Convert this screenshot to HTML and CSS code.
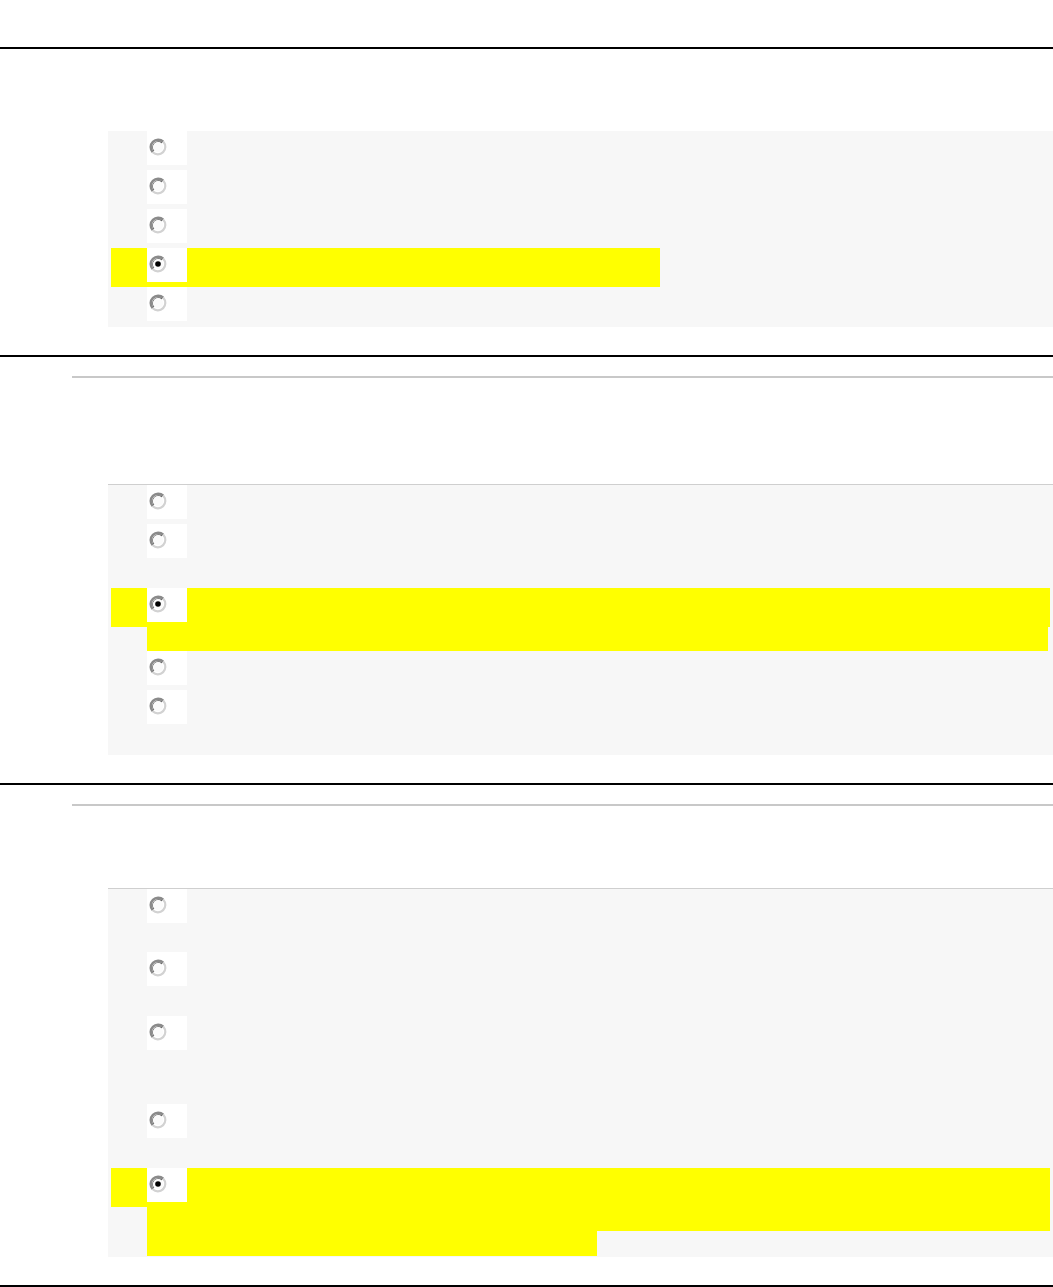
FILE: index.html
```html
<!DOCTYPE html>
<html lang="en">
<head>
    <meta charset="UTF-8">
    <meta name="viewport" content="width=device-width, initial-scale=1.0">
    <title>Quiz review</title>
    <link rel="stylesheet" href="styles.css">
</head>
<body>
    <svg class="sprite" xmlns="http://www.w3.org/2000/svg">
        <symbol id="radio" viewBox="0 0 18 18">
            <circle cx="9" cy="9" r="8" fill="#fff"/>
            <path d="M3.7 14.3A7.5 7.5 0 0 1 14.3 3.7" fill="none" stroke="#8a8a8a" stroke-width="2.4"/>
            <path d="M14.3 3.7A7.5 7.5 0 0 1 3.7 14.3" fill="none" stroke="#d2d2d2" stroke-width="2.2"/>
            <path d="M5 13A5.7 5.7 0 0 1 13 5" fill="none" stroke="#5e5e5e" stroke-width="1.2"/>
            <circle cx="9" cy="9" r="5.1" fill="#fbfbfb"/>
        </symbol>
        <symbol id="radio-checked" viewBox="0 0 18 18">
            <use href="#radio"/>
            <circle cx="9" cy="9" r="2.8" fill="#000"/>
        </symbol>
    </svg>

    <div class="header"></div>

    <!-- question 1 -->
    <div class="question">
        <div class="q-text"></div>
        <div class="answers">
            <div class="option">
                <div class="first"><span class="radio-cell"><svg><use href="#radio"/></svg></span></div>
            </div>
            <div class="option">
                <div class="first"><span class="radio-cell"><svg><use href="#radio"/></svg></span></div>
            </div>
            <div class="option">
                <div class="first"><span class="radio-cell"><svg><use href="#radio"/></svg></span></div>
            </div>
            <div class="option">
                <div class="first hl" style="width: 549px"><span class="radio-cell"><svg><use href="#radio-checked"/></svg></span></div>
            </div>
            <div class="option">
                <div class="first"><span class="radio-cell"><svg><use href="#radio"/></svg></span></div>
            </div>
        </div>
    </div>

    <!-- question 2 -->
    <div class="question">
        <hr class="rule">
        <div class="q-text tall"></div>
        <div class="answers boxed">
            <div class="option">
                <div class="first"><span class="radio-cell"><svg><use href="#radio"/></svg></span></div>
            </div>
            <div class="option">
                <div class="first"><span class="radio-cell"><svg><use href="#radio"/></svg></span></div>
                <div class="more"></div>
            </div>
            <div class="option">
                <div class="first hl" style="width: 939px"><span class="radio-cell"><svg><use href="#radio-checked"/></svg></span></div>
                <div class="more hl" style="width: 901px"></div>
            </div>
            <div class="option">
                <div class="first"><span class="radio-cell"><svg><use href="#radio"/></svg></span></div>
            </div>
            <div class="option">
                <div class="first"><span class="radio-cell"><svg><use href="#radio"/></svg></span></div>
                <div class="more"></div>
            </div>
        </div>
    </div>

    <!-- question 3 -->
    <div class="question">
        <hr class="rule">
        <div class="q-text"></div>
        <div class="answers boxed">
            <div class="option">
                <div class="first"><span class="radio-cell"><svg><use href="#radio"/></svg></span></div>
                <div class="more"></div>
            </div>
            <div class="option">
                <div class="first"><span class="radio-cell"><svg><use href="#radio"/></svg></span></div>
                <div class="more"></div>
            </div>
            <div class="option">
                <div class="first"><span class="radio-cell"><svg><use href="#radio"/></svg></span></div>
                <div class="more"></div>
                <div class="more"></div>
            </div>
            <div class="option">
                <div class="first"><span class="radio-cell"><svg><use href="#radio"/></svg></span></div>
                <div class="more"></div>
            </div>
            <div class="option">
                <div class="first hl" style="width: 939px"><span class="radio-cell"><svg><use href="#radio-checked"/></svg></span></div>
                <div class="more hl" style="width: 903px"></div>
                <div class="more hl" style="width: 450px"></div>
            </div>
        </div>
    </div>
</body>
</html>
```

FILE: styles.css
```css
body {
    font-family: "Liberation Sans", Arial, sans-serif;
    background-color: #fff;
    margin: 0;
    padding: 0;
}
.sprite {
    display: none;
}
.header {
    height: 47px;
    border-bottom: 2px solid #000;
}
.question {
    padding-bottom: 28px;
    border-bottom: 2px solid #000;
}
.rule {
    margin: 19px 0 0 72px;
    height: 2px;
    border: none;
    background-color: #c8c8c8;
}
.q-text {
    height: 82px;
}
.q-text.tall {
    height: 106px;
}
.answers {
    margin-left: 108px;
    padding-bottom: 1px;
    background-color: #f7f7f7;
}
.answers.boxed {
    border-top: 1px solid #cfcfcf;
}
.option .first {
    display: flex;
    align-items: flex-start;
    box-sizing: border-box;
    height: 39px;
    margin-left: 3px;
    padding-left: 36px;
}
.option .more {
    height: 24.6px;
    margin-left: 39px;
}
.hl {
    background-color: #ffff00;
}
.radio-cell {
    display: block;
    box-sizing: border-box;
    width: 40px;
    height: 34px;
    padding: 7px 0 0 2px;
    background-color: #fff;
}
.radio-cell svg {
    display: block;
    width: 18px;
    height: 18px;
}
```
